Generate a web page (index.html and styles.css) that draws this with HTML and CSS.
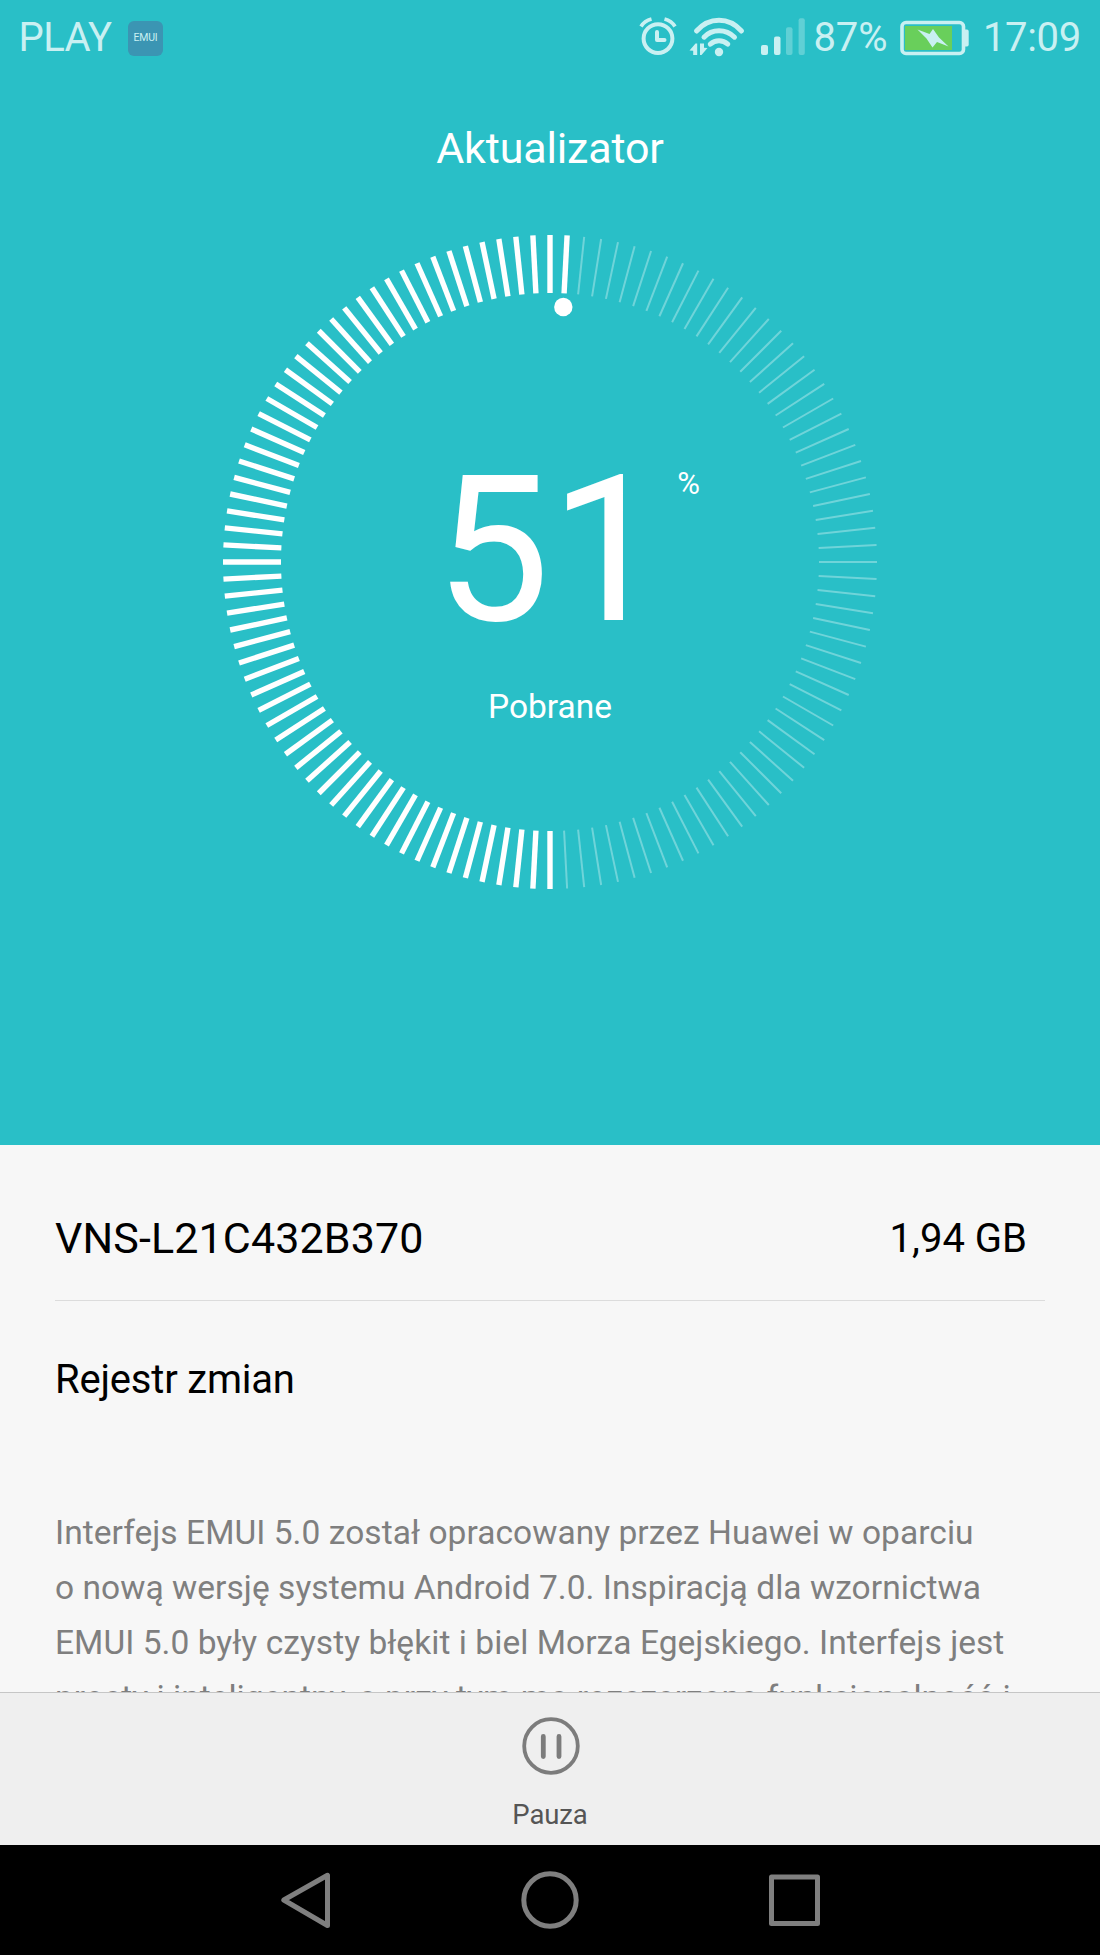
FILE: index.html
```html
<!DOCTYPE html>
<html lang="pl">
<head>
<meta charset="utf-8">
<title>Aktualizator</title>
<link rel="stylesheet" href="styles.css">
</head>
<body>
<main class="screen">
  <header class="hero">
    <div class="status">
      <span class="carrier">PLAY</span>
      <span class="badge">EMUI</span>
      <svg class="icons" width="200" height="76" viewBox="635 0 200 76" fill="none" stroke-linecap="round" stroke-linejoin="round">
        <g stroke="#c9f0f2">
          <circle cx="658" cy="38.600" r="14.400" stroke-width="4"/>
          <path d="M657 32v8h7.500" stroke-width="4"/>
          <path d="M641 26.500Q644.500 20.800 651.500 19M675 26.500Q671.500 20.800 664.500 19" stroke-width="3.800" stroke-linecap="butt"/>
          <path d="M696.500 31Q706 20.300 719 20.300T741.500 31M704 37.200Q710 30.800 719 30.800T734.500 37.200M710.300 44.200Q714 40.800 719 40.800T727.800 44.200" stroke-width="5"/>
        </g>
        <g fill="#c9f0f2">
          <circle cx="719" cy="52" r="4.200"/>
          <path d="M697.200 43.500v11.500h-4v-4.200l-3.700-.3 6-7zM700 43.500h4v4.200l3.500.3-6 7h-1.500z"/>
          <rect x="761" y="45" width="7" height="10" rx="2"/>
          <rect x="774" y="36.500" width="6.500" height="18.500" rx="2"/>
          <rect x="786" y="27.300" width="6.500" height="27.700" rx="2" opacity=".35"/>
          <rect x="798.600" y="18.300" width="6.200" height="36.700" rx="2" opacity=".35"/>
        </g>
      </svg>
      <span class="level">87%</span>
      <svg class="battery" width="70" height="36" viewBox="0 0 70 36">
        <rect x="2" y="2.500" width="61.500" height="31" rx="4" fill="none" stroke="#c9f0f2" stroke-width="3.600"/>
        <path d="M65 9.500h2q1.700 0 1.700 2v13q0 2-1.700 2h-2z" fill="#c9f0f2"/>
        <rect x="5" y="6" width="47" height="24" fill="#69cf5b"/>
        <path d="M17.500 9.500l12 4.500 3.500-5 6 8.500 9.500 9-11.500-4.500-4.500 5.500-6-9z" fill="#c9f0f2"/>
      </svg>
      <span class="clock">17:09</span>
    </div>
    <h1 class="title">Aktualizator</h1>
    <div class="dial">
      <svg class="ring" width="654" height="654" viewBox="-327 -327 654 654">
        <g id="ticks"></g>
        <circle cx="13.300" cy="-255" r="9.200" fill="#fff"/>
      </svg>
      <div class="progress">
        <div class="number">51<span class="percent">%</span></div>
        <div class="label">Pobrane</div>
      </div>
    </div>
  </header>
  <section class="details">
    <div class="package">
      <span class="version">VNS-L21C432B370</span>
      <span class="size">1,94 GB</span>
    </div>
    <h2 class="heading">Rejestr zmian</h2>
    <p class="changes">Interfejs EMUI 5.0 został opracowany przez Huawei w oparciu<br>o nową wersję systemu Android 7.0. Inspiracją dla wzornictwa<br>EMUI 5.0 były czysty błękit i biel Morza Egejskiego. Interfejs jest<br><span class="last">prosty i inteligentny, a przy tym ma rozszerzoną funkcjonalność i</span></p>
  </section>
  <div class="actions">
    <svg width="60" height="60" viewBox="0 0 60 60" fill="none" stroke="#7c7c7c" stroke-linecap="round">
      <circle cx="30" cy="30" r="26.800" stroke-width="3.800"/>
      <path d="M22.300 20.500v20M38 20.500v20" stroke-width="4.800"/>
    </svg>
    <span class="pause">Pauza</span>
  </div>
  <nav class="nav">
    <svg width="560" height="110" viewBox="270 1845 560 110" fill="none" stroke="#7f7f7f" stroke-width="5" stroke-linejoin="round">
      <path d="M327.500 1875.300v50.200L283.800 1900z"/>
      <circle cx="550" cy="1900" r="26.200"/>
      <rect x="771.500" y="1877" width="46" height="46.500"/>
    </svg>
  </nav>
</main>
<script src="dial.js"></script>
</body>
</html>
```
FILE: styles.css
```css
* { box-sizing: border-box; }
body {
  margin: 0;
  font-family: Roboto, "Liberation Sans", sans-serif;
}
.screen {
  width: 1100px;
  height: 1955px;
  display: flex;
  flex-direction: column;
  overflow: hidden;
  background: #f7f7f7;
}
.hero {
  height: 1145.400px;
  flex: none;
  display: flex;
  flex-direction: column;
  align-items: center;
  background: #29bfc7;
  color: #fff;
}
.status {
  width: 100%;
  height: 76px;
  display: flex;
  align-items: center;
  padding: 0 19px 0 18.500px;
  color: #c9f0f2;
  font-size: 40px;
  line-height: 76px;
}
.carrier { letter-spacing: -.6px; }
.badge {
  width: 35px;
  height: 35px;
  margin-left: 16.500px;
  border-radius: 6px;
  background: #3b95b3;
  font-size: 10.500px;
  line-height: 34px;
  text-align: center;
  letter-spacing: -.2px;
}
.icons { margin-left: auto; margin-right: -22px; }
.level { letter-spacing: -.1px; }
.battery { margin: 0 12.500px 0 13px; }
.clock { letter-spacing: -.3px; }
.title {
  margin: 42px 0 57px;
  font-size: 43px;
  line-height: 60px;
  font-weight: 400;
  letter-spacing: -.15px;
}
.dial {
  width: 654px;
  height: 654px;
  display: grid;
}
.ring, .progress { grid-area: 1 / 1; }
.progress {
  display: flex;
  flex-direction: column;
  align-items: center;
  padding-top: 215px;
}
.number {
  position: relative;
  font-size: 205px;
  line-height: 200px;
}
.percent {
  position: absolute;
  left: 242.500px;
  top: 13.500px;
  font-size: 31px;
  line-height: 40px;
}
.label {
  margin-top: 31.500px;
  font-size: 33.500px;
  line-height: 50px;
}
.details {
  flex: 1;
  min-height: 0;
  overflow: hidden;
  padding: 0 55px;
}
.package {
  height: 155.600px;
  padding: 63.600px 18px 0 0;
  display: flex;
  justify-content: space-between;
  border-bottom: 1px solid #dcdcdc;
  line-height: 60px;
}
.version {
  margin-top: -1px;
  font-size: 43px;
  letter-spacing: .12px;
}
.size { font-size: 40px; }
.heading {
  margin: 49.500px 0 0;
  font-size: 40px;
  line-height: 60px;
  font-weight: 400;
  letter-spacing: -.2px;
}
.changes {
  margin: 94.300px 0 0;
  font-size: 33.500px;
  line-height: 55.100px;
  letter-spacing: .05px;
  color: #7f7f7f;
  white-space: nowrap;
}
.last { letter-spacing: .02px; }
.actions {
  flex: none;
  height: 153px;
  padding: 23px 0 0 2px;
  border-top: 1.500px solid #c6c6c6;
  background: #efefef;
  display: flex;
  flex-direction: column;
  align-items: center;
}
.pause {
  margin: 18.500px 2px 0 0;
  font-size: 27.500px;
  line-height: 40px;
  color: #555;
  letter-spacing: -.1px;
}
.nav {
  flex: none;
  height: 110px;
  display: flex;
  justify-content: center;
  background: #000;
}
```
FILE: dial.js
```js
// 120 ticks, 3 degrees apart; the completed part runs from the bottom clockwise.
const ticks = document.getElementById("ticks");
const total = 120;
const done = 62;
for (let i = 0; i < total; i++) {
  const line = document.createElementNS("http://www.w3.org/2000/svg", "line");
  line.setAttribute("y1", 269);
  line.setAttribute("y2", 327);
  line.setAttribute("transform", `rotate(${i * 3})`);
  line.setAttribute("stroke", i < done ? "#fff" : "rgba(255,255,255,.33)");
  line.setAttribute("stroke-width", i < done ? 5.4 : 2);
  ticks.appendChild(line);
}
```
